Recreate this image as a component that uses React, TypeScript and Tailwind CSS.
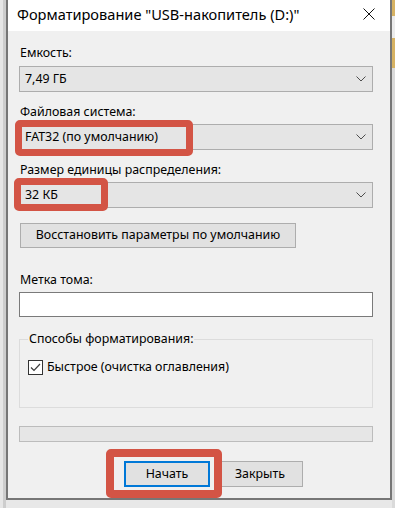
import React from "react";

function Chevron() {
  return (
    <svg width="10" height="6" viewBox="0 0 10 6" className="block">
      <polyline points="0.5,0.5 5,5 9.5,0.5" fill="none" stroke="#4d4d4d" strokeWidth="1" />
    </svg>
  );
}

function Combo({ value }: { value: string }) {
  return (
    <div className="h-[26px] w-[354px] border border-[#adadad] bg-[#e5e5e5] flex items-center justify-between pl-[5px] pr-[6px] text-[12.4px] text-black">
      <span>{value}</span>
      <Chevron />
    </div>
  );
}

export default function App() {
  return (
    <div
      className="relative w-[395px] h-[508px] overflow-hidden bg-[#e8e8e8]"
      style={{ fontFamily: '"Noto Sans", "Open Sans", sans-serif' }}
    >
      <div className="flex h-full">
        {/* left background strip */}
        <div className="w-[6px] h-full flex">
          <div className="w-[3px] h-full bg-[#e6e6e6]" />
          <div className="w-[3px] h-full bg-[#cdcdcd]" />
        </div>
        {/* dialog */}
        <div className="w-[386px] h-[500px] border-x-2 border-b-2 border-[#767676] bg-[#f0f0f0] flex flex-col">
          {/* title bar */}
          <div className="h-[31px] bg-white flex items-start justify-between pl-[9px] pr-[15px] pt-[4px]">
            <span className="text-[14.6px] leading-[20px] text-black">Форматирование "USB-накопитель (D:)"</span>
            <svg width="12" height="12" viewBox="0 0 12 12" className="mt-[4px]">
              <path d="M0.5 0.5 L11.5 11.5 M11.5 0.5 L0.5 11.5" stroke="#111" strokeWidth="1" />
            </svg>
          </div>
          {/* body */}
          <div className="flex flex-col pl-[11px] text-[12.4px] text-black">
            <div className="mt-[14px] h-[16px] leading-[16px] pl-[1px]">Емкость:</div>
            <div className="mt-[5px]"><Combo value="7,49 ГБ" /></div>
            <div className="mt-[12px] h-[16px] leading-[16px] pl-[1px]">Файловая система:</div>
            <div className="mt-[4px]"><Combo value="FAT32 (по умолчанию)" /></div>
            <div className="mt-[12px] h-[16px] leading-[16px] pl-[1px]">Размер единицы распределения:</div>
            <div className="mt-[4px]"><Combo value="32 КБ" /></div>
            <button className="mt-[15px] ml-[1px] h-[25px] w-[276px] border border-[#adadad] bg-[#e1e1e1] text-[12.4px] text-black flex items-center justify-center">
              Восстановить параметры по умолчанию
            </button>
            <div className="mt-[24px] h-[16px] leading-[16px] pl-[1px]">Метка тома:</div>
            <div className="mt-[4px] h-[25px] w-[354px] border border-[#7a7a7a] bg-white" />
            <fieldset className="mt-[14px] h-[77px] w-[354px] border border-[#dcdcdc] pl-[8px] pr-[6px]">
              <legend className="px-[1px] h-[16px] leading-[16px]">Способы форматирования:</legend>
              <div className="mt-[12px] flex items-center gap-[4px]">
                <div className="w-[15px] h-[15px] border border-[#333333] bg-white flex items-center justify-center">
                  <svg width="11" height="9" viewBox="0 0 11 9">
                    <polyline points="1,4.5 4,7.5 10,1" fill="none" stroke="#3c3c3c" strokeWidth="1.2" />
                  </svg>
                </div>
                <span className="leading-[16px]">Быстрое (очистка оглавления)</span>
              </div>
            </fieldset>
            <div className="mt-[18px] h-[16px] w-[354px] border border-[#bcbcbc] bg-[#e6e6e6]" />
            <div className="mt-[19px] ml-[105px] flex gap-[7px]">
              <button className="h-[26px] w-[86px] border-2 border-[#0078d7] bg-[#e1e1e1] text-[12.4px] text-black flex items-center justify-center">
                Начать
              </button>
              <button className="h-[26px] w-[86px] border border-[#adadad] bg-[#e1e1e1] text-[12.4px] text-black flex items-center justify-center">
                Закрыть
              </button>
            </div>
          </div>
        </div>
        {/* right background strip */}
        <div className="w-[3px] h-full flex flex-col">
          <div className="h-[16px] bg-[#d6b263]" />
          <div className="h-[22px] bg-[#ececec]" />
          <div className="h-[30px] bg-[#d6b263]" />
          <div className="flex-1 bg-[#dadada]" />
        </div>
      </div>

      {/* red annotation boxes */}
      <div className="absolute left-[15px] top-[120px] w-[178px] h-[36px] border-[7px] border-[#d35445] rounded-[5px]" />
      <div className="absolute left-[14px] top-[178px] w-[94px] h-[33px] border-[7px] border-[#d35445] rounded-[5px]" />
      <div className="absolute left-[106px] top-[449px] w-[116px] h-[49px] border-[8px] border-[#d35445] rounded-[5px]" />
    </div>
  );
}
